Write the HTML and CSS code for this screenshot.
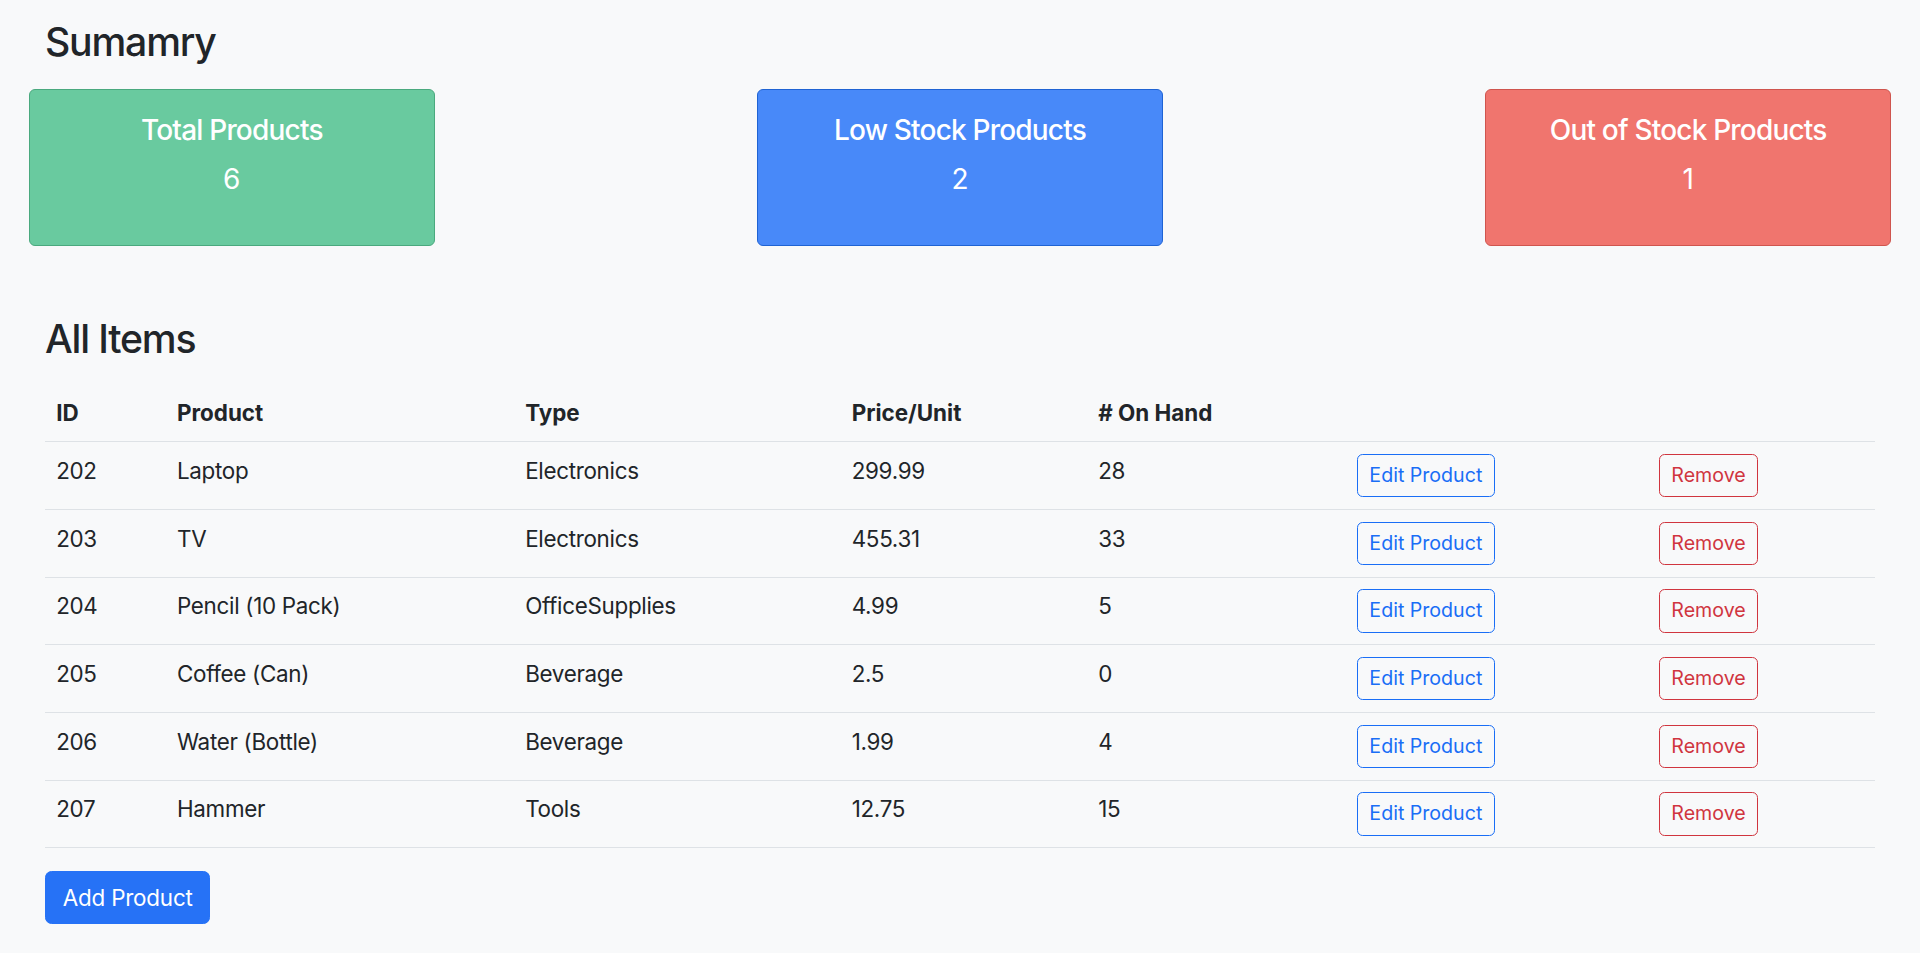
FILE: index.html
```html
<!DOCTYPE html>
<html lang="en">
<head>
<meta charset="utf-8">
<title>Inventory</title>
<link rel="stylesheet" href="styles.css">
</head>
<body>
<main class="page">
  <h3 class="heading heading-summary">Sumamry</h3>
  <section class="cards">
    <div class="card card-green">
      <h5 class="card-title">Total Products</h5>
      <p class="card-text">6</p>
    </div>
    <div class="card card-blue">
      <h5 class="card-title">Low Stock Products</h5>
      <p class="card-text">2</p>
    </div>
    <div class="card card-red">
      <h5 class="card-title">Out of Stock Products</h5>
      <p class="card-text">1</p>
    </div>
  </section>

  <h3 class="heading heading-items">All Items</h3>
  <table class="items">
    <colgroup>
      <col class="c-id"><col class="c-product"><col class="c-type"><col class="c-price"><col class="c-hand"><col class="c-edit"><col class="c-remove">
    </colgroup>
    <thead>
      <tr><th>ID</th><th>Product</th><th>Type</th><th>Price/Unit</th><th># On Hand</th><th></th><th></th></tr>
    </thead>
    <tbody>
      <tr><td>202</td><td>Laptop</td><td>Electronics</td><td>299.99</td><td>28</td><td><button class="btn-sm btn-edit">Edit Product</button></td><td><button class="btn-sm btn-remove">Remove</button></td></tr>
      <tr><td>203</td><td>TV</td><td>Electronics</td><td>455.31</td><td>33</td><td><button class="btn-sm btn-edit">Edit Product</button></td><td><button class="btn-sm btn-remove">Remove</button></td></tr>
      <tr><td>204</td><td>Pencil (10 Pack)</td><td>OfficeSupplies</td><td>4.99</td><td>5</td><td><button class="btn-sm btn-edit">Edit Product</button></td><td><button class="btn-sm btn-remove">Remove</button></td></tr>
      <tr><td>205</td><td>Coffee (Can)</td><td>Beverage</td><td>2.5</td><td>0</td><td><button class="btn-sm btn-edit">Edit Product</button></td><td><button class="btn-sm btn-remove">Remove</button></td></tr>
      <tr><td>206</td><td>Water (Bottle)</td><td>Beverage</td><td>1.99</td><td>4</td><td><button class="btn-sm btn-edit">Edit Product</button></td><td><button class="btn-sm btn-remove">Remove</button></td></tr>
      <tr><td>207</td><td>Hammer</td><td>Tools</td><td>12.75</td><td>15</td><td><button class="btn-sm btn-edit">Edit Product</button></td><td><button class="btn-sm btn-remove">Remove</button></td></tr>
    </tbody>
  </table>
  <button class="btn-add">Add Product</button>
</main>
</body>
</html>
```

FILE: styles.css
```css
html, body {
  margin: 0;
  padding: 0;
  background: #f8f9fa;
}
body {
  font-family: Inter, "Liberation Sans", Arial, sans-serif;
  color: #212529;
  font-size: 22.4px;
  line-height: 1.5;
}
.page {
  padding: 18px 45px 0 45px;
}
.heading {
  margin: 0;
  font-size: 39.2px;
  font-weight: 500;
  line-height: 47px;
  letter-spacing: -1.2px;
}
.heading-summary {
  margin-bottom: 23.7px;
}
.heading-items {
  margin-top: 69.8px;
  margin-bottom: 21.9px;
}
.cards {
  display: flex;
  justify-content: space-between;
  margin: 0 -16px;
}
.card {
  width: 405.6px;
  box-sizing: border-box;
  border: 1px solid;
  border-radius: 6px;
  padding: 23.9px 22.4px 21.9px;
  text-align: center;
  color: #fff;
}
.card-green { background: #69ca9f; border-color: #4aa97e; }
.card-blue { background: #4889f9; border-color: #1f63d3; }
.card-red { background: #f0756e; border-color: #cf554e; }
.card-title {
  margin: 0 0 11.2px 0;
  font-size: 28px;
  font-weight: 500;
  line-height: 33.6px;
  letter-spacing: -0.8px;
}
.card-text {
  margin: 0 0 22.4px 0;
  font-size: 28px;
  line-height: 42px;
}
.items {
  width: 100%;
  table-layout: fixed;
  border-collapse: collapse;
  margin-bottom: 23px;
}
.c-id { width: 120.8px; }
.c-product { width: 348.2px; }
.c-type { width: 326.5px; }
.c-price { width: 246.5px; }
.c-hand { width: 259px; }
.c-edit { width: 302px; }
.c-remove { width: 227px; }
.items th, .items td {
  padding: 11.7px 11.2px;
  text-align: left;
  vertical-align: top;
  line-height: 33.6px;
  border-bottom: 1px solid #dee2e6;
}
.items td {
  letter-spacing: -0.3px;
}
.items th {
  font-weight: 700;
}
.btn-sm {
  font-family: inherit;
  font-size: 19.6px;
  line-height: 29.4px;
  padding: 5.95px 11.2px;
  border: 1px solid;
  border-radius: 5.6px;
  background: transparent;
  display: inline-block;
  vertical-align: top;
  letter-spacing: 0;
}
.btn-edit { color: #1a6ef6; border-color: #1a6ef6; }
.btn-remove { color: #d0353f; border-color: #d0353f; }
.btn-add {
  font-family: inherit;
  font-size: 22.4px;
  line-height: 33.6px;
  padding: 8.7px 16.8px;
  border: 1px solid #2672f6;
  border-radius: 6.5px;
  background: #2672f6;
  color: #fff;
  letter-spacing: -0.2px;
}
```
